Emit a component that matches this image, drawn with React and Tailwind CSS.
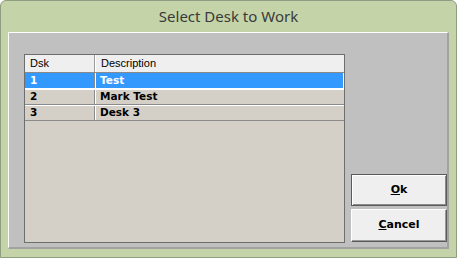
const rows = [
  { dsk: '1', desc: 'Test', selected: true },
  { dsk: '2', desc: 'Mark Test' },
  { dsk: '3', desc: 'Desk 3' },
];

const App = () => {
  return (
    <div className="w-[457px] h-[258px] bg-[#c4d4a8] border border-[#8f9d80] rounded-t-[6px] flex flex-col overflow-hidden">
      {/* Title bar */}
      <div className="h-[31px] flex items-center justify-center pb-[1px] text-[15px] text-[#3a3a3a] font-['Noto_Sans',sans-serif]">
        Select Desk to Work
      </div>

      {/* Client area */}
      <div className="ml-[7px] w-[441px] h-[217px] bg-[#c0c0c0] border-t border-l border-white border-r-2 border-b-2 border-r-[#a2a2a2] border-b-[#a2a2a2] flex items-start pl-[15px] pt-[21px]">
        {/* Grid */}
        <div className="w-[321px] h-[189px] bg-[#d4d0c8] border border-[#6e6e6e] font-['Liberation_Sans',sans-serif] text-[11px]">
          <div className="flex h-[18px] bg-[#efefef] border-b border-[#8a8a8a]">
            <div className="w-[70px] pl-[5px] flex items-center border-r border-[#9a9a9a]">Dsk</div>
            <div className="flex-1 pl-[5px] flex items-center border-l border-white">Description</div>
          </div>
          {rows.map((r) => (
            <div
              key={r.dsk}
              className={
                r.selected
                  ? 'flex h-[16px] bg-[#3399ff] text-white border-b border-r border-white font-["DejaVu_Sans",sans-serif] font-bold text-[10.5px]'
                  : 'flex h-[16px] text-black border-b border-[#8a8a8a] border-t border-t-white font-["DejaVu_Sans",sans-serif] font-bold text-[10.5px]'
              }
            >
              <div className="w-[70px] pl-[5px] flex items-center border-r border-[#8a8a8a]">{r.dsk}</div>
              <div className="flex-1 pl-[4px] flex items-center border-l border-white">{r.desc}</div>
            </div>
          ))}
        </div>

        {/* Buttons */}
        <div className="ml-[6px] mt-[120px] flex flex-col gap-[3px] font-['DejaVu_Sans',sans-serif] font-bold text-[11px]">
          <button className="w-[96px] h-[32px] bg-[#efefef] border border-[#5a5a5a] shadow-[inset_1px_1px_0_#ffffff,inset_-1px_-1px_0_#8a8a8a] flex items-center justify-center text-black">
            <span><span className="underline">O</span>k</span>
          </button>
          <button className="w-[96px] h-[33px] bg-[#efefef] border border-t-white border-l-white border-r-[#5a5a5a] border-b-[#5a5a5a] shadow-[inset_-1px_-1px_0_#9a9a9a] flex items-center justify-center text-black">
            <span><span className="underline">C</span>ancel</span>
          </button>
        </div>
      </div>
    </div>
  );
};

export default App;
